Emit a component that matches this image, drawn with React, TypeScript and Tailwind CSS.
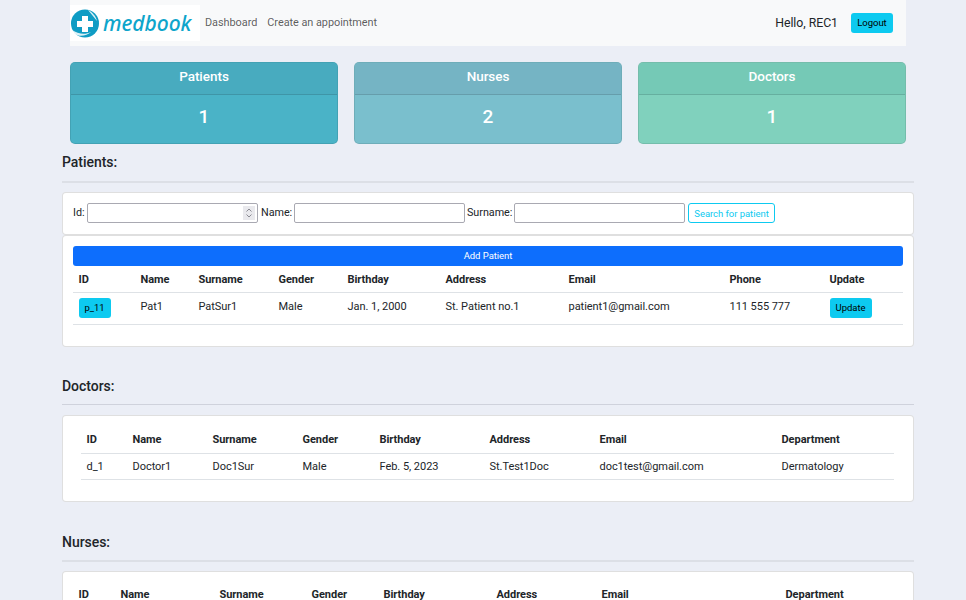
import React from "react";

const patientColumns = ["ID", "Name", "Surname", "Gender", "Birthday", "Address", "Email", "Phone", "Update"];
const patientWidths = [62, 58, 80, 69, 98, 123, 161, 100, 79];
const doctorColumns = ["ID", "Name", "Surname", "Gender", "Birthday", "Address", "Email", "Department"];
const doctorWidths = [46, 80, 90, 77, 110, 110, 182, 118];
const doctorRow = ["d_1", "Doctor1", "Doc1Sur", "Male", "Feb. 5, 2023", "St.Test1Doc", "doc1test@gmail.com", "Dermatology"];
const nurseWidths = [42, 99, 92, 72, 113, 105, 184, 123];

function StatCard({ title, value, head, body }: { title: string; value: string; head: string; body: string }) {
  return (
    <div className={`w-[268px] rounded-[5px] border border-[#00000018] overflow-hidden ${body}`}>
      <div className={`h-[32px] pb-[4px] flex items-center justify-center border-b border-[#00000020] text-[13.5px] font-medium text-white ${head}`}>
        {title}
      </div>
      <div className="h-[48px] pb-[4px] flex items-center justify-center text-[19px] font-medium text-white">{value}</div>
    </div>
  );
}

function SectionHeading({ children, mt, line }: { children: string; mt: string; line: string }) {
  return (
    <div className={mt}>
      <h2 className="text-[14px] leading-[21px] font-medium text-[#212529]">{children}</h2>
      <div className={line} />
    </div>
  );
}

function HeadRow({ columns, widths, h }: { columns: string[]; widths: number[]; h: string }) {
  return (
    <div className={`flex items-center pt-[2px] border-b border-[#dee2e6] ${h}`}>
      {columns.map((c, i) => (
        <div key={c} className="px-[5.5px] text-[11px] font-bold text-[#212529]" style={{ width: widths[i] }}>
          {c}
        </div>
      ))}
    </div>
  );
}

function Logo() {
  return (
    <div className="w-[130px] h-[36px] bg-white flex items-center pl-[1px] font-['Noto_Sans',sans-serif]">
      <svg width="28" height="29" viewBox="0 0 28 29">
        <circle cx="14" cy="14.5" r="14" fill="#0f9cc4" />
        <path d="M1 21 C7 25 14 26 20 23 C16 27 8 28 4 25Z" fill="#fff" opacity="0.85" />
        <path d="M17 1 C21 3 25 7 26 12 C23 8 20 5 17 1Z" fill="#fff" opacity="0.85" />
        <path d="M11 7 H17 V12 H22 V18 H17 V23 H11 V18 H6 V12 H11Z" fill="#fff" />
      </svg>
      <span className="ml-[4px] text-[21px] italic font-medium text-[#0ea5cb] leading-none">medbook</span>
    </div>
  );
}

export default function App() {
  return (
    <div className="font-['Roboto',sans-serif] h-screen overflow-hidden bg-[#ebeef6] text-[#212529] tracking-[-0.04px]">
      <div className="ml-[70px] w-[836px] h-[46px] bg-[#f8f9fa] flex items-center">
        <Logo />
        <a className="ml-[5px] pt-[1px] text-[10.9px] text-[#000000a6]">Dashboard</a>
        <a className="ml-[10px] pt-[1px] text-[10.9px] text-[#000000a6]">Create an appointment</a>
        <span className="ml-auto text-[12.3px] text-[#212529]">Hello, REC1</span>
        <button className="ml-[13px] mr-[13px] h-[20px] w-[42px] rounded-[3px] bg-[#0dcaf0] text-[9.5px] text-black">
          Logout
        </button>
      </div>

      <div className="ml-[70px] mt-[16px] flex gap-[16px] h-[82px]">
        <StatCard title="Patients" value="1" head="bg-[#48abbf]" body="bg-[#4ab3c7]" />
        <StatCard title="Nurses" value="2" head="bg-[#75b4c4]" body="bg-[#7abfcd]" />
        <StatCard title="Doctors" value="1" head="bg-[#75c9b6]" body="bg-[#80d1bd]" />
      </div>

      <div className="ml-[62px] w-[852px]">
        <SectionHeading mt="mt-[8px]" line="mt-[8px] h-[2px] bg-[#dcdfe6]">Patients:</SectionHeading>

        <div className="mt-[9px] h-[43px] bg-white rounded-[4px] border border-[#00000020] flex items-start pl-[10px] pt-[10px] text-[10.8px] leading-[19px] gap-[2px]">
          <label className="w-[12px]">Id:</label>
          <div className="relative">
            <input className="block w-[171px] h-[20px] border border-[#a9a9b2] rounded-[2px] bg-white" />
            <svg className="absolute right-[3px] top-[3px]" width="12" height="14" viewBox="0 0 12 14">
              <rect width="12" height="14" fill="#e9e9ed" />
              <path d="M3.5 5.5 L6 3 L8.5 5.5 M3.5 8.5 L6 11 L8.5 8.5" fill="none" stroke="#8a8a92" strokeWidth="1" />
            </svg>
          </div>
          <label className="ml-[1px] w-[31px]">Name:</label>
          <input className="w-[171px] h-[20px] border border-[#a9a9b2] rounded-[2px] bg-white" />
          <label className="w-[45px]">Surname:</label>
          <input className="w-[171px] h-[20px] border border-[#a9a9b2] rounded-[2px] bg-white" />
          <button className="ml-[1px] w-[87px] h-[20px] rounded-[3px] border border-[#0dcaf0] text-[9.5px] text-[#0dcaf0] bg-white">
            Search for patient
          </button>
        </div>

        <div className="h-[112px] bg-white rounded-[4px] border border-[#00000020] px-[10px] pt-[10px]">
          <button className="block w-full h-[20px] rounded-[3px] bg-[#0d6efd] text-[9.5px] text-white">Add Patient</button>
          <HeadRow columns={patientColumns} widths={patientWidths} h="h-[27px]" />
          <div className="flex items-start h-[32px] border-b border-[#dee2e6] text-[11px]">
            <div className="px-[5.5px] pt-[5px]" style={{ width: patientWidths[0] }}>
              <button className="block w-[32px] h-[20px] rounded-[3px] bg-[#0dcaf0] text-[9.5px] text-black">p_11</button>
            </div>
            {["Pat1", "PatSur1", "Male", "Jan. 1, 2000", "St. Patient no.1", "patient1@gmail.com", "111 555 777"].map((v, i) => (
              <div key={v} className="px-[5.5px] pt-[6px]" style={{ width: patientWidths[i + 1] }}>
                {v}
              </div>
            ))}
            <div className="px-[5.5px] pt-[5px]" style={{ width: patientWidths[8] }}>
              <button className="block w-[42px] h-[20px] rounded-[3px] bg-[#0dcaf0] text-[9.5px] text-black">Update</button>
            </div>
          </div>
        </div>

        <SectionHeading mt="mt-[29px]" line="mt-[7px] h-[1px] bg-[#cfd2dc]">Doctors:</SectionHeading>

        <div className="mt-[10px] h-[87px] bg-white rounded-[4px] border border-[#00000020] pl-[18px] pr-[19px] pt-[10px]">
          <HeadRow columns={doctorColumns} widths={doctorWidths} h="h-[28px]" />
          <div className="flex items-center pt-[2px] h-[26px] border-b border-[#dee2e6] text-[11px]">
            {doctorRow.map((v, i) => (
              <div key={v} className="px-[5.5px]" style={{ width: doctorWidths[i] }}>
                {v}
              </div>
            ))}
          </div>
        </div>

        <SectionHeading mt="mt-[30px]" line="mt-[7px] h-[2px] bg-[#dcdfe6]">Nurses:</SectionHeading>

        <div className="mt-[9px] h-[87px] bg-white rounded-[4px] border border-[#00000020] px-[10px] pt-[10px]">
          <HeadRow columns={doctorColumns} widths={nurseWidths} h="h-[26px]" />
        </div>
      </div>
    </div>
  );
}
